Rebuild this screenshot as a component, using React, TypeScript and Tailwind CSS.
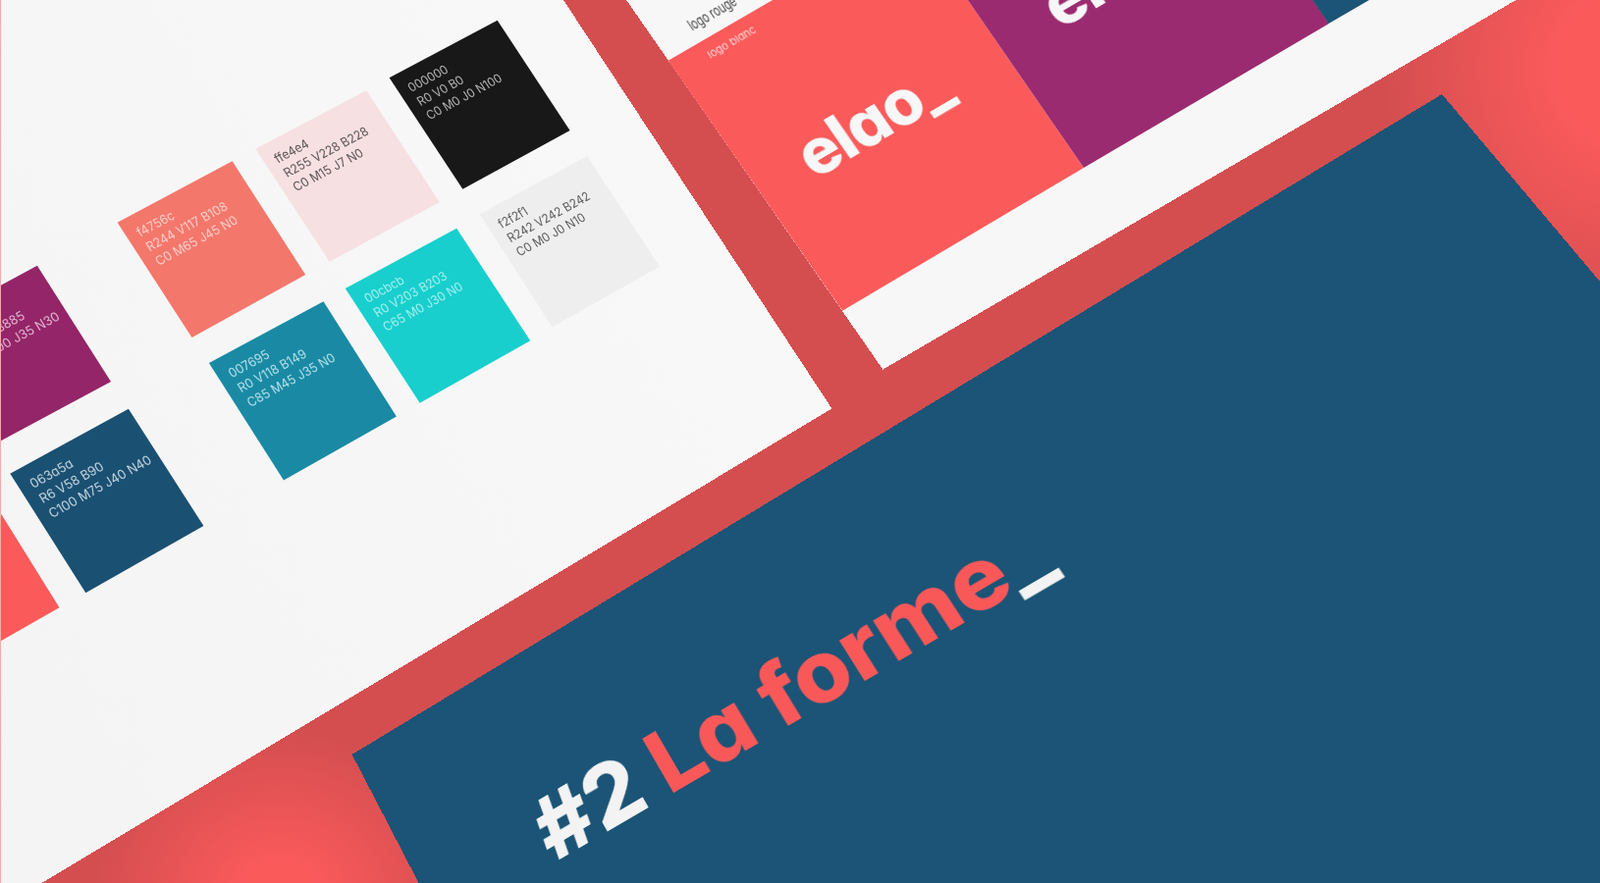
import React from "react";

type P = [number, number];
type Corners = [P, P, P, P]; // top-left, top-right, bottom-right, bottom-left

// Homography that sends a w x h local box onto four screen corners.
function solve(q: Corners, w: number, h: number) {
  const [[x0, y0], [x1, y1], [x2, y2], [x3, y3]] = q;
  const dx1 = x1 - x2, dx2 = x3 - x2, sx = x0 - x1 + x2 - x3;
  const dy1 = y1 - y2, dy2 = y3 - y2, sy = y0 - y1 + y2 - y3;
  const den = dx1 * dy2 - dx2 * dy1;
  const g = (sx * dy2 - dx2 * sy) / den;
  const k = (dx1 * sy - sx * dy1) / den;
  return {
    a: (x1 - x0 + g * x1) / w,
    b: (x3 - x0 + k * x3) / h,
    c: x0,
    d: (y1 - y0 + g * y1) / w,
    e: (y3 - y0 + k * y3) / h,
    f: y0,
    g: g / w,
    h: k / h,
  };
}

function matrixOf(q: Corners, w: number, h: number) {
  const m = solve(q, w, h);
  return `matrix3d(${[m.a, m.d, 0, m.g, m.b, m.e, 0, m.h, 0, 0, 1, 0, m.c, m.f, 0, 1].join(",")})`;
}

// Screen point back to the quad's local coordinates.
function toLocal(q: Corners, w: number, h: number, p: P): P {
  const { a, b, c, d, e, f, g, h: k } = solve(q, w, h);
  const A = e - f * k, B = c * k - b, C = b * f - c * e;
  const D = f * g - d, E = a - c * g, F = c * d - a * f;
  const G = d * k - e * g, H = b * g - a * k, I = a * e - b * d;
  const s = G * p[0] + H * p[1] + I;
  return [(A * p[0] + B * p[1] + C) / s, (D * p[0] + E * p[1] + F) / s];
}

function Quad({ q, w, h, className, children }: { q: Corners; w: number; h: number; className: string; children?: React.ReactNode }) {
  return (
    <div
      className={`absolute left-0 top-0 origin-top-left overflow-hidden ${className}`}
      style={{ width: w, height: h, transform: matrixOf(q, w, h) }}
    >
      {children}
    </div>
  );
}

// A line of text whose baseline starts on a given screen point of its quad.
function Placed({ q, w, h, at, size, className, children }: { q: Corners; w: number; h: number; at: P; size: number; className: string; children: React.ReactNode }) {
  const [x, y] = toLocal(q, w, h, at);
  return (
    <div
      className={`absolute whitespace-nowrap leading-none blur-[0.3px] ${className}`}
      style={{ left: x, top: y - size * 0.8635, fontSize: size }}
    >
      {children}
    </div>
  );
}

const swatches: { q: Corners; bg: string; fg: string; lines: string[] }[] = [
  { q: [[396.6, 79.3], [506.7, 20.7], [580.6, 133], [471.4, 192.7]], bg: "bg-[#181818]", fg: "text-[#b4b4b4]", lines: ["000000", "R0 V0 B0", "C0 M0 J0 N100"] },
  { q: [[260.3, 151.7], [373.2, 92.3], [447.8, 206], [335.7, 266.7]], bg: "bg-[#f7e0e2]", fg: "text-[#5a5254]", lines: ["ffe4e4", "R255 V228 B228", "C0 M15 J7 N0"] },
  { q: [[119.6, 226.7], [236.6, 164.3], [311.2, 280], [195.5, 344]], bg: "bg-[#f4776c]", fg: "text-[#fbcfc9]", lines: ["f4756c", "R244 V117 B108", "C0 M65 J45 N0"] },
  { q: [[488.8, 218.3], [598.2, 159.3], [671.9, 271.7], [562.5, 333.3]], bg: "bg-[#eeeeee]", fg: "text-[#5c5c5c]", lines: ["f2f2f1", "R242 V242 B242", "C0 M0 J0 N10"] },
  { q: [[351.8, 294], [465.2, 232.7], [540.2, 347.3], [427.7, 410.7]], bg: "bg-[#18cfce]", fg: "text-[#a6f0ec]", lines: ["00cbcb", "R0 V203 B203", "C65 M0 J30 N0"] },
  { q: [[212.9, 370], [329.5, 307.3], [403.9, 424.5], [289, 489.4]], bg: "bg-[#1a8aa4]", fg: "text-[#b4e0ea]", lines: ["007695", "R0 V118 B149", "C85 M45 J35 N0"] },
  { q: [[-83, 336], [37.9, 270.7], [113, 389], [-8, 454]], bg: "bg-[#942568]", fg: "text-[#e3b6d3]", lines: ["932885", "R93 V28 B885", "C50 M100 J35 N30"] },
  { q: [[10.3, 482.7], [130.9, 416.7], [207.4, 536], [87.3, 604.3]], bg: "bg-[#1a5072]", fg: "text-[#c4d6df]", lines: ["063a5a", "R6 V58 B90", "C100 M75 J40 N40"] },
  { q: [[-100, 560], [-20, 490], [60.5, 619.3], [-60, 688]], bg: "bg-[#fb5a5a]", fg: "text-[#fbd0d0]", lines: [] },
];

const redQ: Corners = [[680.8, 61.7], [929, -82.4], [1104, 171], [858.2, 316.7]];
const purpleQ: Corners = [[929, -82.4], [1178.6, -229.4], [1353.6, 24], [1104, 171]];
const navyQ: Corners = [[358.6, 769], [1469, 96], [2113, 860], [766.6, 1555]];
const whiteQ: Corners = [[534, -150], [1178, -526], [1543, 0], [899, 376]];

const inter = "font-['Inter',sans-serif] [font-feature-settings:'cv11']";

export default function App() {
  return (
    <div className="relative h-[900px] w-[1630px] overflow-hidden bg-[#d44e50] bg-[radial-gradient(ellipse_240px_270px_at_1650px_70px,#fb5a5b_25%,transparent),radial-gradient(ellipse_190px_170px_at_285px_915px,#fb5a5b_20%,transparent)]">
      <Quad q={[[-867, 29], [180, -600], [847, 416], [-200, 1045]]} w={1200} h={1100} className="bg-[#f6f6f6] bg-linear-to-r from-[#f3f3f3] to-[#f8f8f8]" />

      {swatches.map((s) => (
        <Quad key={s.bg} q={s.q} w={200} h={200} className={s.bg}>
          <div className={`flex flex-col pl-[17px] pt-[16px] text-[18.5px] leading-[25px] whitespace-nowrap blur-[0.3px] ${inter} ${s.fg}`}>
            {s.lines.map((l) => (
              <span key={l}>{l}</span>
            ))}
          </div>
        </Quad>
      ))}

      <Quad q={whiteQ} w={740} h={440} className="bg-[#f7f7f7]">
        <Placed q={whiteQ} w={740} h={440} at={[706.5, 33]} size={10.5} className={`text-[#444] ${inter}`}>
          logo rouge
        </Placed>
      </Quad>
      <Quad q={redQ} w={287} h={310} className="bg-[#fb5a5a]">
        <Placed q={redQ} w={287} h={310} at={[724, 60]} size={11} className={`text-[#fcd4d4] ${inter}`}>
          logo blanc
        </Placed>
        <Placed q={redQ} w={287} h={310} at={[830, 183]} size={66} className={`font-extrabold tracking-[-0.02em] text-[#f7f7f7] ${inter}`}>
          elao_
        </Placed>
      </Quad>
      <Quad q={purpleQ} w={287} h={310} className="bg-[#9b2b70]">
        <Placed q={purpleQ} w={287} h={310} at={[1080, 30]} size={66} className={`font-extrabold tracking-[-0.02em] text-[#f7f7f7] ${inter}`}>
          elao_
        </Placed>
      </Quad>
      <Quad q={[[1178.6, -229.4], [1325, -315], [1500, -61], [1353.6, 24]]} w={170} h={310} className="bg-[#1b5476]" />

      <Quad q={navyQ} w={1295} h={885} className="bg-[#1b5476]">
        <Placed q={navyQ} w={1295} h={885} at={[564, 880]} size={93} className={`font-extrabold text-[#f3f3f3] ${inter}`}>
          #2 <span className="text-[#f95859]">La forme</span>_
        </Placed>
      </Quad>

      <div className="absolute inset-y-0 left-0 w-px bg-[#f9a9a9]" />
    </div>
  );
}
